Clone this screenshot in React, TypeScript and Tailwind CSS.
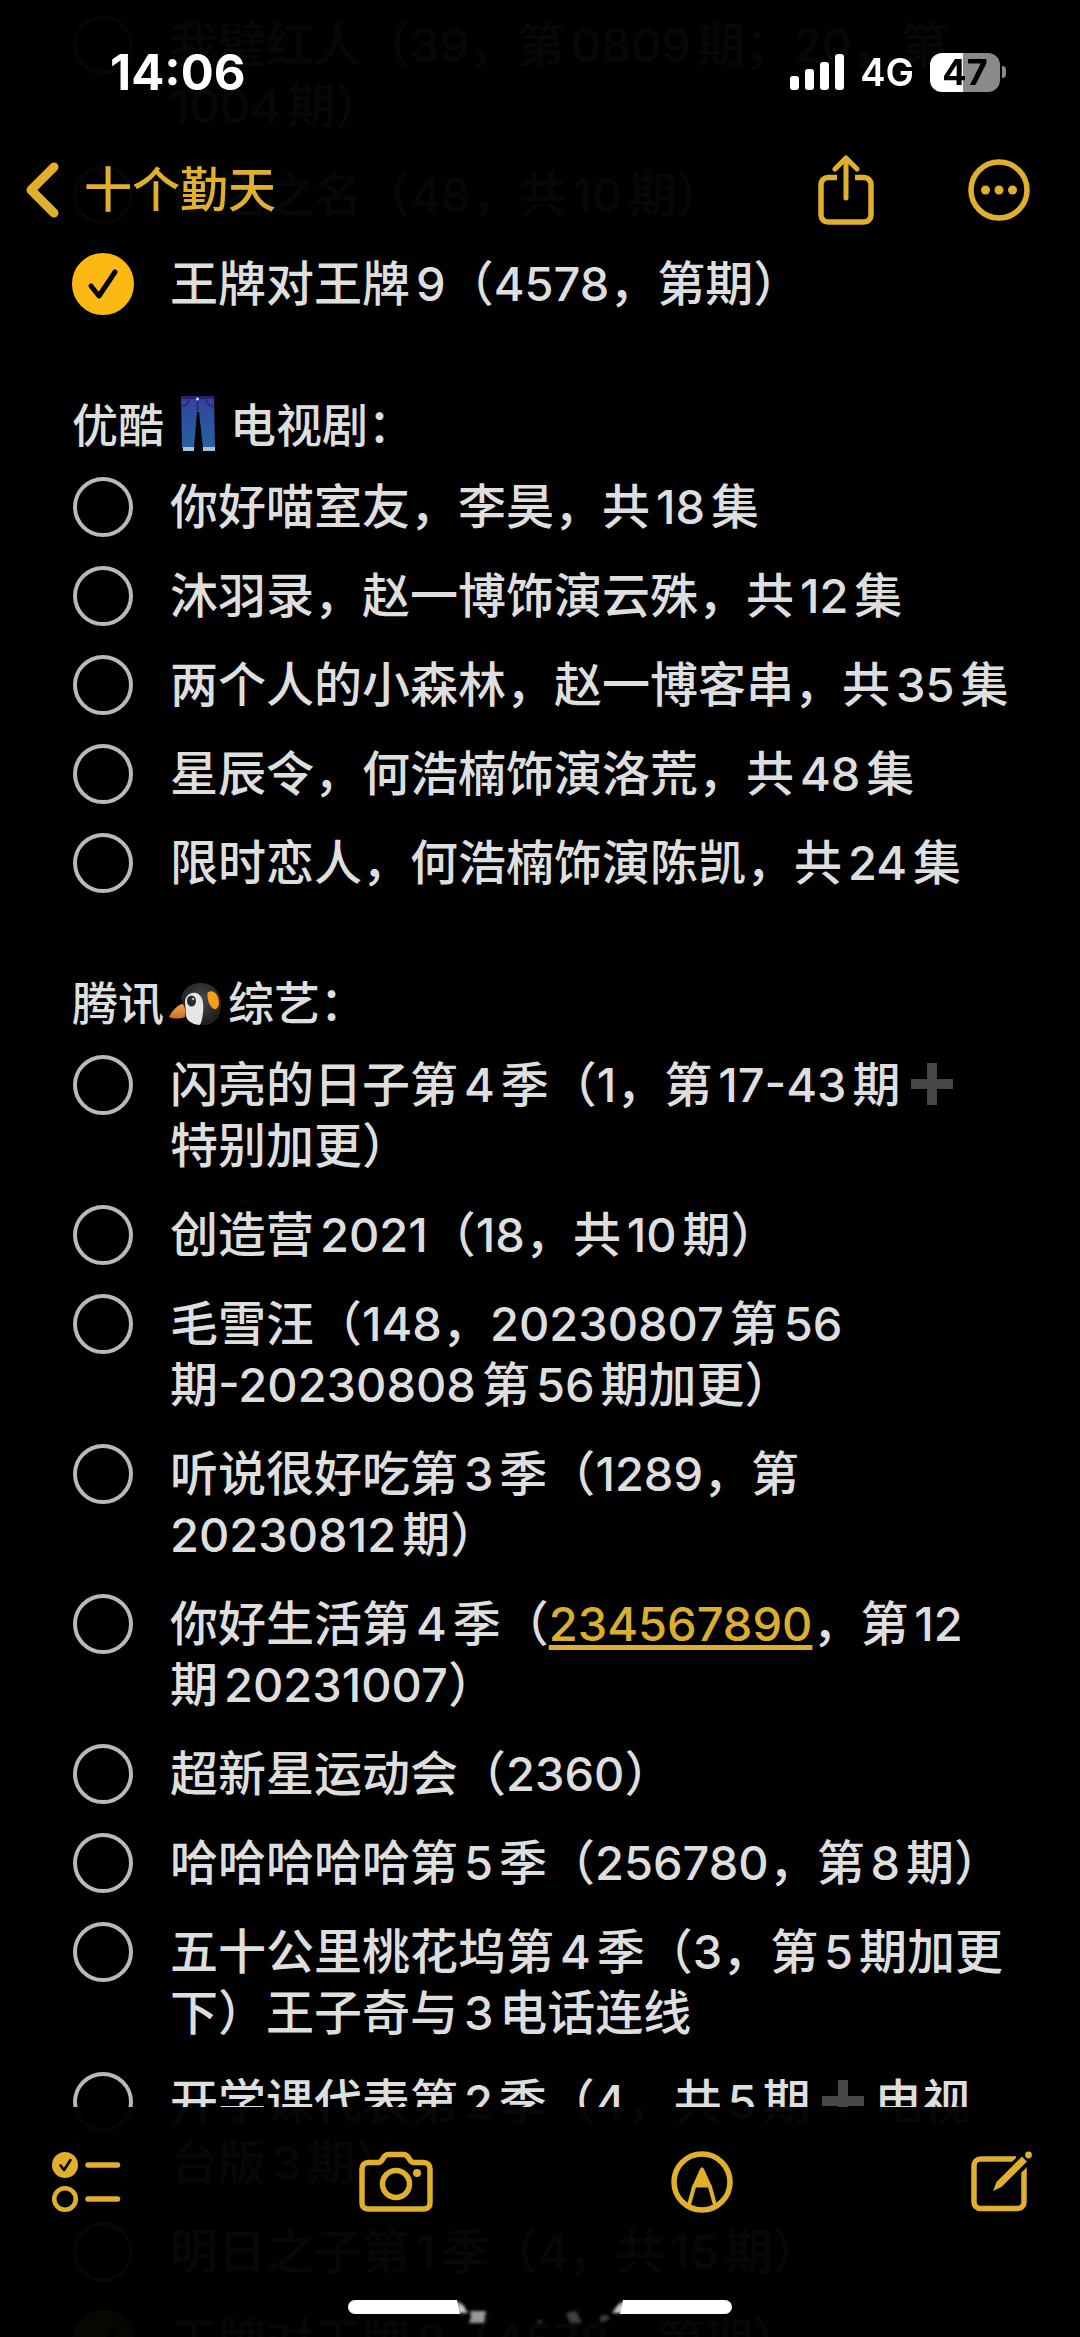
import { Fragment } from "react";

interface NoteItem {
  text: string;
  done?: boolean;
  /** Digits inside the text that are detected as a phone number. */
  phone?: string;
}

const before: NoteItem[] = [
  { text: "我璧红人（39，第0809期；20，第\u200b1004期）" },
  { text: "以团之名（48，共10期）" },
  { text: "王牌对王牌9（4578，第期）", done: true },
];

const youku: NoteItem[] = [
  { text: "你好喵室友，李昊，共18集" },
  { text: "沐羽录，赵一博饰演云殊，共12集" },
  { text: "两个人的小森林，赵一博客串，共35集" },
  { text: "星辰令，何浩楠饰演洛荒，共48集" },
  { text: "限时恋人，何浩楠饰演陈凯，共24集" },
];

const tencent: NoteItem[] = [
  { text: "闪亮的日子第4季（1，第17-43期➕特别加更）" },
  { text: "创造营2021（18，共10期）" },
  { text: "毛雪汪（148，20230807第56期-20230808第56期加更）" },
  { text: "听说很好吃第3季（1289，第\u200b20230812期）" },
  { text: "你好生活第4季（234567890，第12期20231007）", phone: "234567890" },
  { text: "超新星运动会（2360）" },
  { text: "哈哈哈哈哈第5季（256780，第8期）" },
  { text: "五十公里桃花坞第4季（3，第5期加更下）王子奇与3电话连线" },
  { text: "开学课代表第2季（4，共5期➕电视台版3期）" },
  { text: "明日之子第1季（4，共15期）" },
  { text: "王牌对王牌8（4578，第期）", done: true },
];

function PlusEmoji() {
  return (
    <svg viewBox="0 0 48 48" className="mx-2 inline-block size-12 align-[-6px]" role="img" aria-label="➕">
      <path d="M19 3h10v16h16v10H29v16H19V29H3V19h16z" fill="#464646" />
    </svg>
  );
}

function JeansEmoji() {
  return (
    <svg viewBox="0 0 56 60" className="mx-1 inline-block h-[60px] w-[58px] align-[-12px]" role="img" aria-label="👖">
      <defs>
        <linearGradient id="denim" x1="0" y1="0" x2="0" y2="1">
          <stop offset="0" stopColor="#3a3a9c" />
          <stop offset="0.35" stopColor="#2c4f9f" />
          <stop offset="1" stopColor="#27629f" />
        </linearGradient>
      </defs>
      <path d="M12 2h33l1 52H34l-4-36h-2l-3 36H13z" fill="url(#denim)" />
      <path d="M12 2h33v3H12z" fill="#24246e" />
      <path d="M13 12q6 0 7-7M44 12q-6 0-7-7M28.500 5v12" fill="none" stroke="#22286e" strokeWidth="1.500" />
      <circle cx="28.500" cy="5" r="1.500" fill="#d8d8e8" />
      <path d="M14 53h11v4H14zM34 53h12v4H34z" fill="#a9c4d8" />
    </svg>
  );
}

function PenguinEmoji() {
  return (
    <svg viewBox="0 0 56 50" className="mx-1 inline-block h-[50px] w-[56px] align-[-9px]" role="img" aria-label="🐧">
      <defs>
        <radialGradient id="head" cx="0.5" cy="0.4" r="0.6">
          <stop offset="0" stopColor="#4a4a4a" />
          <stop offset="1" stopColor="#1c1c1c" />
        </radialGradient>
        <linearGradient id="beak" x1="0" y1="0" x2="0" y2="1">
          <stop offset="0" stopColor="#f5a64a" />
          <stop offset="1" stopColor="#c9702a" />
        </linearGradient>
      </defs>
      <path d="M13 19C15 9 24 3 35 4c12 1 19 11 18 24-1 11-7 18-18 18-9 0-15-4-17-10z" fill="url(#head)" />
      <path d="M17 22c1-6 6-9 11-8 7 2 8 11 7 20-1 7-2 12-4 12-7-1-12-4-13-9z" fill="#e6e6e6" />
      <path d="M1 38c3-6 8-12 14-13 2 4 3 9 2 13-5 2-11 2-16 0z" fill="url(#beak)" />
      <ellipse cx="23.500" cy="22" rx="4.500" ry="5.500" fill="#2a2a2a" />
      <circle cx="25" cy="20" r="1.300" fill="#bbb" />
      <path d="M40 13c6-3 11 3 11 11 0 4-3 7-5 6-5-2-8-13-6-17z" fill="#f59d1c" />
    </svg>
  );
}

/** Sets digit runs a step smaller than the Han text and swaps in the drawn emoji. */
function NoteText({ text, phone }: { text: string; phone?: string }) {
  const parts = text.split(/(\d[\d-]*|-\d+|➕)/);
  return (
    <>
      {parts.map((part, i) => {
        if (part === "➕") return <PlusEmoji key={i} />;
        if (part === phone) {
          return (
            <a
              key={i}
              href={`tel:${part}`}
              className="text-[47px] leading-none text-[#dcae30] underline decoration-[5px] underline-offset-4 [text-decoration-skip-ink:none]"
            >
              {part}
            </a>
          );
        }
        if (/\d/.test(part)) {
          return (
            <span key={i} className="text-[47px] leading-none">
              {part}
            </span>
          );
        }
        return <Fragment key={i}>{part}</Fragment>;
      })}
    </>
  );
}

function Checklist({ items }: { items: NoteItem[] }) {
  return (
    <ul className="flex flex-col gap-7">
      {items.map((item) => (
        <li key={item.text}>
          <label className="flex items-start gap-9">
            <span className="relative flex h-[61px] w-[62px] shrink-0 items-center justify-center">
              <input
                type="checkbox"
                defaultChecked={item.done}
                className="peer size-[60px] shrink-0 appearance-none rounded-full border-4 border-[#b9b9b9] checked:size-[62px] checked:border-[#fdb913] checked:bg-[#fdb913]"
              />
              <svg
                viewBox="0 0 62 62"
                className="pointer-events-none absolute inset-0 m-auto hidden size-[62px] peer-checked:block"
                fill="none"
                stroke="#000"
                strokeWidth="5"
                strokeLinecap="round"
                strokeLinejoin="round"
              >
                <path d="M19 33l8 10 16-24" />
              </svg>
            </span>
            <span className="min-w-0 flex-1">
              <NoteText text={item.text} phone={item.phone} />
            </span>
          </label>
        </li>
      ))}
    </ul>
  );
}

function StatusBar() {
  return (
    <div className="flex h-[144px] items-center justify-between pr-[74px] pl-[110px] text-white">
      <time className="text-[49px] leading-none font-bold">14:06</time>
      <div className="flex items-center gap-4">
        <svg viewBox="0 0 54 36" className="h-9 w-[54px]" fill="#fff" aria-label="信号">
          <rect x="0" y="22" width="9" height="14" rx="3" />
          <rect x="15" y="15" width="9" height="21" rx="3" />
          <rect x="30" y="8" width="9" height="28" rx="3" />
          <rect x="45" y="0" width="9" height="36" rx="3" />
        </svg>
        <span className="text-[38px] leading-none font-semibold">4G</span>
        <div className="flex items-center gap-0.5">
          <div className="flex h-[39px] w-[70px] items-center justify-center rounded-xl bg-linear-to-r from-white from-47% to-[#8a8a8a] to-47% text-[36px] leading-none font-bold text-black">
            47
          </div>
          <div className="h-3 w-1 rounded-r-full bg-[#8a8a8a]" />
        </div>
      </div>
    </div>
  );
}

function NavBar() {
  return (
    <nav className="flex h-[92px] items-center justify-between pr-[50px] pl-[26px] text-[#e0b02c]">
      <a href="#folder" className="flex items-center gap-6 text-[48px] leading-none font-medium">
        <svg viewBox="0 0 34 56" className="h-14 w-[34px]" fill="none" stroke="currentColor" strokeWidth="9" strokeLinecap="round" strokeLinejoin="round">
          <path d="M28 5L5 28l23 23" />
        </svg>
        十个勤天
      </a>
      <div className="flex items-center gap-[94px]">
        <button type="button" aria-label="共享">
          <svg viewBox="0 0 56 70" className="h-[70px] w-14" fill="none" stroke="currentColor" strokeWidth="5.500" strokeLinecap="round" strokeLinejoin="round">
            <path d="M19 22.500H10a7 7 0 0 0-7 7V60a7 7 0 0 0 7 7h36a7 7 0 0 0 7-7V29.500a7 7 0 0 0-7-7h-9" strokeLinecap="butt" />
            <path d="M28 43V4M17 14L28 3l11 11" strokeWidth="5" />
          </svg>
        </button>
        <button type="button" aria-label="更多">
          <svg viewBox="0 0 62 62" className="size-[62px]" fill="none" stroke="currentColor" strokeWidth="5.500">
            <circle cx="31" cy="31" r="28" />
            <g fill="currentColor" stroke="none">
              <circle cx="17.500" cy="31" r="4.500" />
              <circle cx="31" cy="31" r="4.500" />
              <circle cx="44.500" cy="31" r="4.500" />
            </g>
          </svg>
        </button>
      </div>
    </nav>
  );
}

function Toolbar() {
  return (
    <div className="flex h-[150px] items-center justify-between pr-12 pl-[52px] text-[#e0b02c]">
      <button type="button" aria-label="核对清单">
        <svg viewBox="0 0 70 62" className="h-[62px] w-[70px]" fill="none" stroke="currentColor" strokeLinecap="round" strokeLinejoin="round">
          <circle cx="13" cy="14" r="13" fill="currentColor" stroke="none" />
          <path d="M8.500 14.500l3.500 4.500 6.500-10" stroke="#000" strokeWidth="2.600" />
          <circle cx="13" cy="48" r="10.800" strokeWidth="4.600" />
          <path d="M36 14h29.500M36 48h29.500" strokeWidth="5.500" />
        </svg>
      </button>
      <button type="button" aria-label="相机">
        <svg viewBox="0 0 74 62" className="h-[62px] w-[74px]" fill="none" stroke="currentColor" strokeWidth="5.500" strokeLinejoin="round">
          <path d="M9.500 11.500H19c2 0 3-1 4-2.500l2-3c1.500-2 2.500-2.500 4.500-2.500h15c2 0 3 .5 4.500 2.500l2 3c1 1.500 2 2.500 4 2.500h9.500c4 0 6.500 2.500 6.500 6.500v34c0 4-2.500 6-6.500 6h-55c-4 0-6.500-2-6.500-6V18c0-4 2.500-6.500 6.500-6.500z" />
          <circle cx="37" cy="33" r="13.500" />
          <circle cx="58" cy="22" r="4" fill="currentColor" stroke="none" />
        </svg>
      </button>
      <button type="button" aria-label="标记">
        <svg viewBox="0 0 62 62" className="size-[62px]" fill="none" stroke="currentColor">
          <circle cx="31" cy="31" r="28" strokeWidth="5.500" />
          <path d="M29 18q2-3.500 4 0l7 15.500v3H22v-3z" fill="currentColor" stroke="none" />
          <path d="M23.500 34L18 54M38.500 34L44 54" strokeWidth="4" />
        </svg>
      </button>
      <button type="button" aria-label="新建备忘录">
        <svg viewBox="0 0 62 62" className="size-[62px]" fill="none" stroke="currentColor">
          <path d="M46 8H10.500a6.500 6.500 0 0 0-6.500 6.500v36.500a6.500 6.500 0 0 0 6.500 6.500h37a6.500 6.500 0 0 0 6.500-6.500V16" strokeWidth="5.500" />
          <path d="M62 1L30 33" stroke="#000" strokeWidth="14" />
          <path d="M52 5.500l5 5-25.500 25.500-8.500 4 3.500-9z" fill="currentColor" stroke="none" />
          <circle cx="58.500" cy="4" r="3.400" fill="currentColor" stroke="none" />
        </svg>
      </button>
    </div>
  );
}

function HomeIndicator() {
  return (
    <svg viewBox="0 0 384 34" className="mx-auto h-[34px] w-[384px]" aria-hidden="true">
      <defs>
        <filter id="smudge" x="-20%" y="-20%" width="140%" height="140%">
          <feGaussianBlur stdDeviation="1.500" />
        </filter>
      </defs>
      <path d="M7 1h102l3 14H7A7 7 0 0 1 7 1zM377 1H275l-3 14h105a7 7 0 0 0 0-14z" fill="#fff" />
      <g filter="url(#smudge)" fill="#fff">
        <path d="M109 2l6 4 5 8h-10zM275 2l-5 4-6 8h11z" opacity="0.800" />
        <path d="M122 12h16l-2 12h-15l2-6z" opacity="0.600" />
        <path d="M218 14l10-2 6 12h-12zM252 17l6-1 5 3-10 5zM189 22l5-1v3h-5z" opacity="0.250" />
      </g>
    </svg>
  );
}

export default function App() {
  return (
    <div className="h-screen overflow-hidden bg-black font-['Inter','Noto_Sans_CJK_SC',sans-serif]">
      <header className="fixed inset-x-0 top-0 z-10 bg-black/97">
        <StatusBar />
        <NavBar />
      </header>

      <main
        lang="zh-CN"
        className="pt-3.5 pr-[70px] pl-[72px] text-[48px] leading-[61px] font-medium text-[#dedede] [text-autospace:normal] [text-spacing-trim:space-all]"
      >
        <Checklist items={before} />
        <h2 className="mt-20 mb-5 text-[46px]">
          优酷
          <JeansEmoji />
          电视剧：
        </h2>
        <Checklist items={youku} />
        <h2 className="mt-20 mb-5 text-[46px]">
          腾讯
          <PenguinEmoji />
          综艺：
        </h2>
        <Checklist items={tencent} />
      </main>

      <footer className="fixed inset-x-0 bottom-0 z-10 bg-black/97">
        <Toolbar />
        <div className="flex h-20 items-end pb-1">
          <HomeIndicator />
        </div>
      </footer>
    </div>
  );
}
